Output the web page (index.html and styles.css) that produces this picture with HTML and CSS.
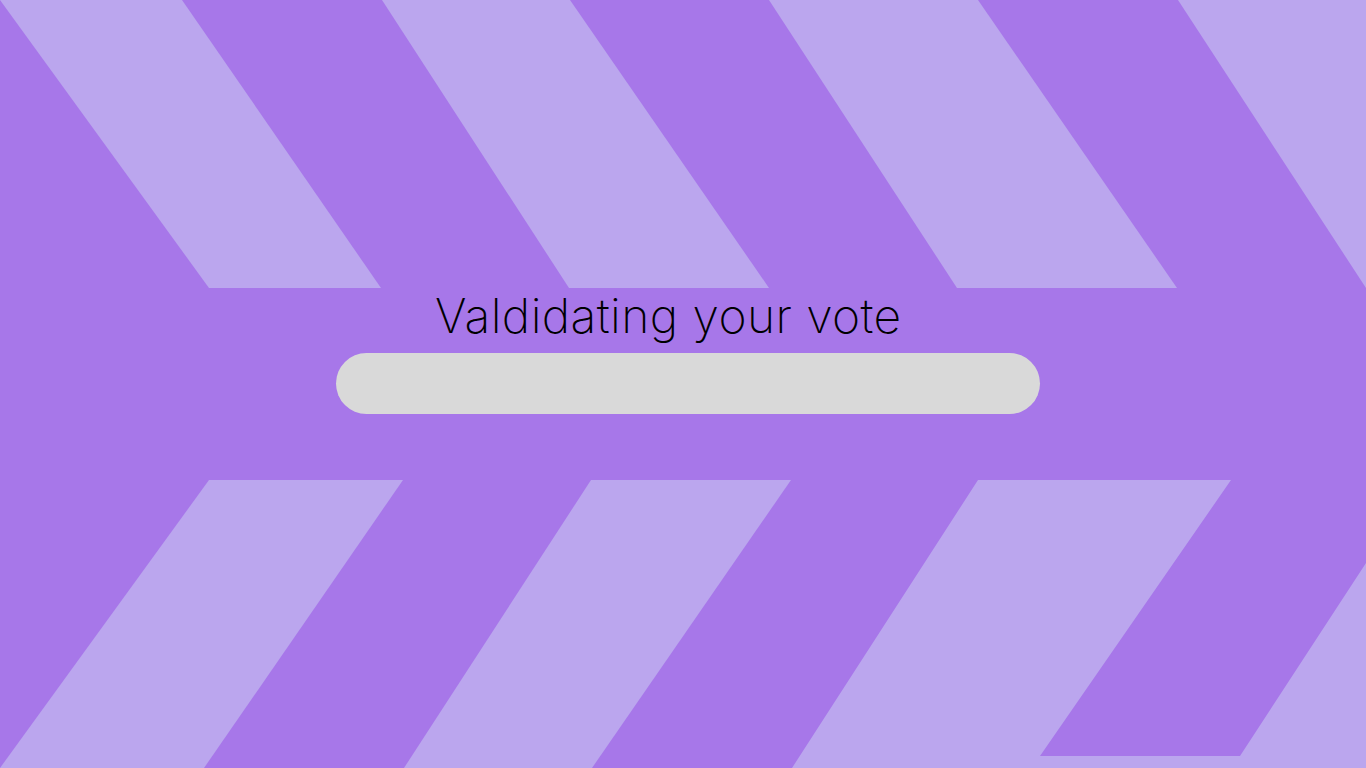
FILE: index.html
```html
<!DOCTYPE html>
<html lang="en">
<head>
<meta charset="utf-8">
<title>Validating your vote</title>
<link rel="stylesheet" href="styles.css">
</head>
<body>
<div class="screen">
  <svg class="backdrop" width="1366" height="768" viewBox="0 0 1366 768" aria-hidden="true">
    <g class="stripe">
      <polygon points="0,0 182,0 381,288 209,288"/>
      <polygon points="382,0 570,0 769,288 569,288"/>
      <polygon points="769,0 978,0 1177,288 957,288"/>
      <polygon points="1178,0 1366,0 1366,288"/>
      <polygon points="209,480 403,480 204,768 0,768"/>
      <polygon points="591,480 791,480 592,768 404,768"/>
      <polygon points="978,480 1231,480 1040,756 1240,756 1366,563 1366,768 792,768"/>
    </g>
  </svg>
  <main class="content">
    <h1 class="title">Valdidating your vote</h1>
    <div class="progress"></div>
  </main>
</div>
</body>
</html>
```

FILE: styles.css
```css
html, body {
  margin: 0;
  padding: 0;
  width: 1366px;
  height: 768px;
  overflow: hidden;
}

.screen {
  position: relative;
  width: 1366px;
  height: 768px;
  background: #a777e9;
  font-family: Inter, "Noto Sans", sans-serif;
}

.backdrop {
  position: absolute;
  left: 0;
  top: 0;
  display: block;
}

.stripe polygon {
  fill: #bba6ee;
}

.content {
  position: relative;
  display: flex;
  flex-direction: column;
  align-items: flex-start;
  padding: 287px 0 0 336px;
  width: 704px;
}

.title {
  margin: 0 0 8px 99px;
  font-size: 48px;
  font-weight: 200;
  line-height: 58px;
  letter-spacing: 0.4px;
  color: #000;
  white-space: nowrap;
}

.progress {
  width: 704px;
  height: 61px;
  border-radius: 31px;
  background: #d9d9d9;
}
```
